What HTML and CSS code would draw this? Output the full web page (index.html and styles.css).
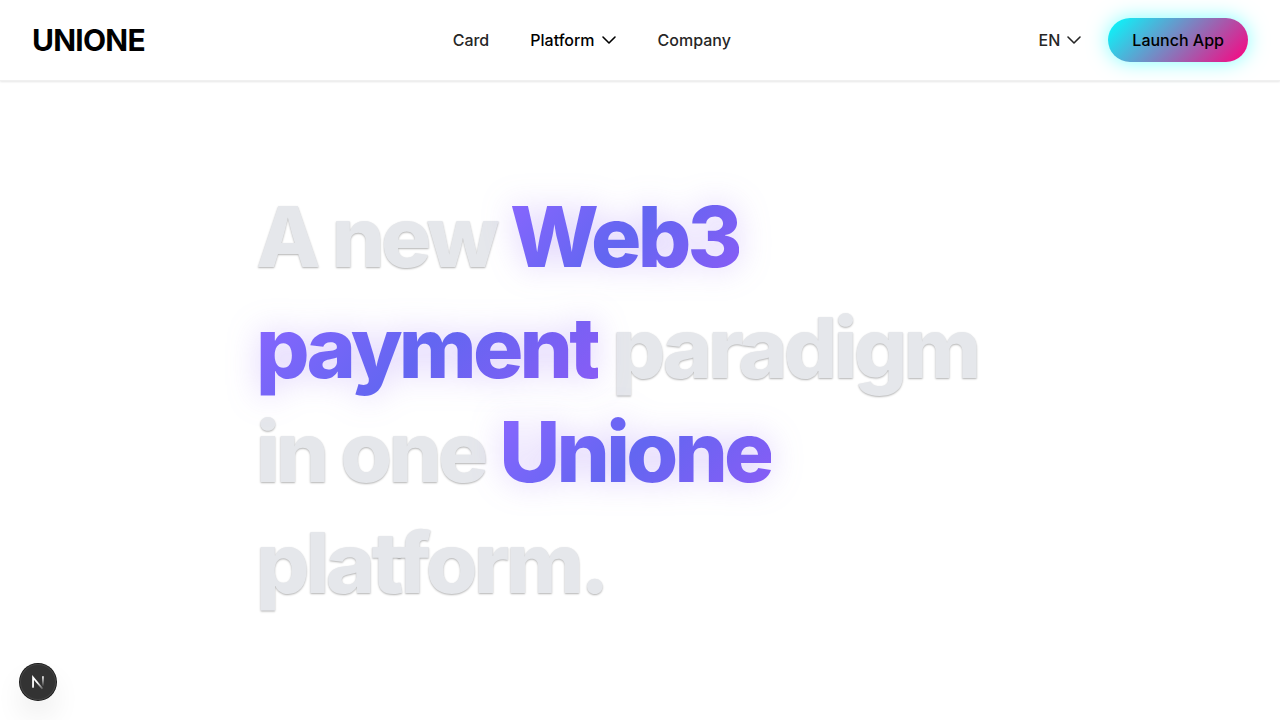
FILE: index.html
```html
<!DOCTYPE html>
<html lang="en">
<head>
<meta charset="utf-8">
<meta name="viewport" content="width=device-width, initial-scale=1">
<title>Unione</title>
<link rel="stylesheet" href="styles.css">
</head>
<body>
<header class="header">
  <a class="logo" href="#">UNIONE</a>
  <nav class="nav" aria-label="Main">
    <a class="nav-item" href="#">Card</a>
    <button class="nav-item active" type="button">Platform
      <svg class="chevron" viewBox="0 0 16 16" aria-hidden="true"><path d="M2 5l6 6 6-6"/></svg>
    </button>
    <a class="nav-item" href="#">Company</a>
  </nav>
  <div class="actions">
    <button class="nav-item" type="button">EN
      <svg class="chevron" viewBox="0 0 16 16" aria-hidden="true"><path d="M2 5l6 6 6-6"/></svg>
    </button>
    <button class="launch" type="button">Launch App</button>
  </div>
</header>
<main class="hero">
  <h1 class="title">
    <span class="line">A new <span class="accent">Web3</span></span>
    <span class="line spaced"><span class="accent">payment</span> paradigm</span>
    <span class="line">in one <span class="accent">Unione</span></span>
    <span class="line spaced">platform.</span>
  </h1>
</main>
<button class="dev-badge" type="button" aria-label="Open developer tools">
  <svg viewBox="0 0 40 40" aria-hidden="true">
    <defs>
      <linearGradient id="diagonal" gradientUnits="userSpaceOnUse" x1="20" y1="20" x2="27" y2="29"><stop stop-color="#fff"/><stop offset="1" stop-color="#fff" stop-opacity="0"/></linearGradient>
      <linearGradient id="stem" gradientUnits="userSpaceOnUse" x1="24" y1="14" x2="24" y2="25"><stop stop-color="#fff"/><stop offset="1" stop-color="#fff" stop-opacity="0"/></linearGradient>
    </defs>
    <path d="M14.5 26.5V15L25 27.5" fill="none" stroke="url(#diagonal)" stroke-width="2"/>
    <path d="M25.5 13.5v11" fill="none" stroke="url(#stem)" stroke-width="1.8"/>
  </svg>
</button>
</body>
</html>
```
FILE: styles.css
```css
* { box-sizing: border-box; }

body {
  margin: 0;
  background: #fff;
  color: #000;
  font-family: Inter, "Liberation Sans", sans-serif;
  font-size: 16px;
  line-height: 24px;
}

a { color: inherit; text-decoration: none; }

button {
  padding: 0;
  border: 0;
  background: none;
  color: inherit;
  font: inherit;
  cursor: pointer;
}

.header {
  display: flex;
  align-items: center;
  justify-content: space-between;
  padding: 18px 32px;
  border-bottom: 1px solid #f0f0f0;
  background: #fff;
  box-shadow: 0 1px 2px rgba(0, 0, 0, 0.1);
}

.logo {
  font-size: 30px;
  font-weight: 700;
  line-height: 36px;
  letter-spacing: -0.025em;
}

.nav, .actions {
  display: flex;
  align-items: center;
}

.nav { gap: 41px; }

.actions { gap: 26px; }

.nav-item {
  display: flex;
  align-items: center;
  gap: 6px;
  color: #262626;
  font-weight: 500;
}

.active { color: #000; }

.chevron {
  width: 16px;
  height: 16px;
  fill: none;
  stroke: currentColor;
  stroke-width: 1.6;
  stroke-linecap: round;
  stroke-linejoin: round;
}

.launch {
  padding: 10px 24px;
  border-radius: 22px;
  background: linear-gradient(135deg, #00ffff, #ff007f);
  box-shadow: 0 0 20px rgba(0, 255, 255, 0.5);
  font-weight: 500;
}

.hero {
  max-width: 768px;
  margin: 0 auto;
  padding: 104px 0;
}

.title {
  margin: 0;
  color: #e5e7eb;
  font-size: 84px;
  font-weight: 800;
  line-height: 104px;
  letter-spacing: -0.045em;
  text-shadow: 0 1px 2px rgba(0, 0, 0, 0.3);
}

.line { display: block; }

.spaced { margin-top: 7px; }

.accent {
  display: inline-block;
  background: linear-gradient(135deg, #8b66ff, #6366f1 50%, #8b5cf6);
  -webkit-background-clip: text;
  background-clip: text;
  color: transparent;
  text-shadow: none;
  filter: drop-shadow(0 0 16px rgba(139, 92, 246, 0.3));
}

.dev-badge {
  position: fixed;
  bottom: 20px;
  left: 20px;
  width: 36px;
  height: 36px;
  border-radius: 50%;
  background: #333;
  box-shadow: inset 0 0 0 1px #444, 0 0 0 1px #171717, 0 16px 32px -8px rgba(0, 0, 0, 0.24);
}

.dev-badge svg {
  display: block;
  width: 36px;
  height: 36px;
}
```
